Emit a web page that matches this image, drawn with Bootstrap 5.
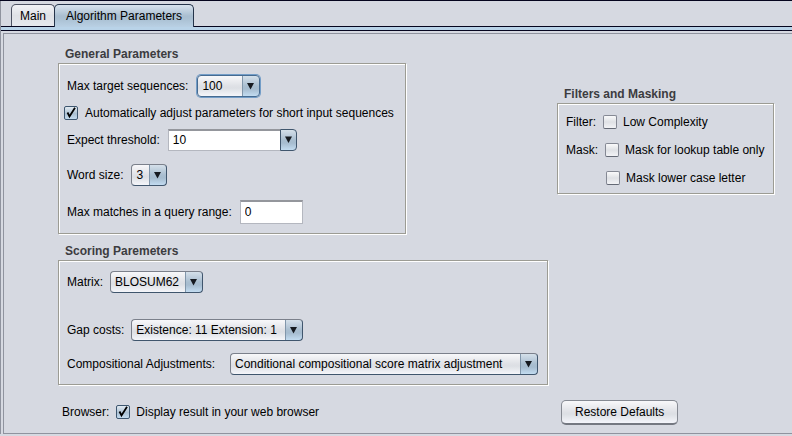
<!DOCTYPE html>
<html lang="en">
<head>
<meta charset="utf-8">
<meta name="viewport" content="width=device-width, initial-scale=1">
<title>Algorithm Parameters</title>
<link href="https://cdn.jsdelivr.net/npm/bootstrap@5.3.0/dist/css/bootstrap.min.css" rel="stylesheet">
<style>
  :root { --panel: #d6d9e1; --edge: #8f939e; --ink: #05051e; }
  body {
    font: 12px/16px "Liberation Sans", Arial, sans-serif;
    color: #000; background: var(--panel);
    border-top: 1px solid var(--ink);
  }
  .window { border-left: 1px solid var(--edge); }
  /* tabs */
  .tab-strip { padding: 3px 10px 0; border: 0; border-bottom: 1px solid var(--ink); }
  .tab-strip .nav-link {
    height: 22px; padding: 3px 8px; margin: 0 0 0 -1px; line-height: 16px; color: #000;
    border: 1px solid #4d5262; border-bottom: 0; border-radius: 5px 5px 0 0;
    background: linear-gradient(#f2f3f6, #dfe1e6 50%, #e6e8ed);
  }
  .tab-strip .nav-item:first-child .nav-link { margin-left: 0; }
  .tab-strip .nav-link.active {
    height: 23px; margin-bottom: -1px; padding: 3px 11px; color: #000; border-color: #25344a;
    background: linear-gradient(#d8e3ee, #a9bed0 50%, #a9bfd1 60%, #b9d0e4);
  }
  .tab-band { height: 4px; background: #b9d3e8; border-bottom: 1px solid var(--ink); }
  .tab-body {
    margin: 2px 0 0 2px; padding: 12px 17px 7px 54px;
    border: 1px solid var(--edge); border-right: 0;
  }
  /* etched groups */
  .columns { display: grid; grid-template-columns: 490px minmax(217px, max-content); column-gap: 9px; }
  .group-title { font-size: 12px; line-height: 16px; font-weight: 700; color: #3c3c40; margin: 0 0 1px; padding-left: 7px; }
  .etched { border: 1px solid #9c9c94; box-shadow: 1px 1px 0 #fff, inset 1px 1px 0 #fff; padding: 0 5px 0 8px; }
  .general { width: 348px; height: 171px; padding-top: 8px; margin-bottom: 1px; }
  .scoring { height: 125px; padding-top: 9px; }
  .masking { height: 91px; padding-top: 4px; }
  .filters { padding-top: 40px; }
  .line { display: flex; align-items: center; gap: 7px; height: 28px; white-space: nowrap; }
  .general .line { height: 27px; gap: 8px; }
  .scoring .line { height: 24px; }
  .line .tick + label, .general .tick + label { margin-left: -1px; }
  .tick-line { margin-left: -3px; }
  .label-wide { min-width: 156px; }
  /* controls */
  .combo {
    appearance: none; height: 22px; padding: 0 20px 0 4px; line-height: 18px; color: #000;
    border: 1px solid #7b808b; border-right-color: #40566d; border-bottom-color: #40566d; border-radius: 4px;
    background:
      url("data:image/svg+xml,%3Csvg xmlns='http://www.w3.org/2000/svg' width='17' height='20'%3E%3Cpath d='M5 7h7L8.500 13.500z' fill='%23161a20'/%3E%3C/svg%3E") right center / 17px 20px no-repeat,
      linear-gradient(#8196aa, #8196aa) right 16px center / 1px 100% no-repeat,
      linear-gradient(#d5e0ea, #a9bed0 50%, #a6bccf 65%, #c3dcf1) right / 17px 100% no-repeat,
      linear-gradient(#f8f8fa, #dfe1e6 50%, #dcdfe4 60%, #f5f6fa);
    outline: 0;
  }
  .combo.is-focused { box-shadow: 0 0 0 1px #739dc7; border-color: #466b91; margin-left: 1px; }
  .w-count { width: 63px; } .w-word { width: 36px; } .w-matrix { width: 93px; }
  .w-gap { width: 172px; } .w-adjust { width: 308px; }
  .field {
    height: 22px; padding: 0 4px; color: #000; background: #fff; min-width: 0;
    border: 1px solid #b4b7bf; border-top: 2px solid #94969c; border-radius: 0; outline: 0;
  }
  .w-threshold { width: 112px; border-right: 0; }
  .w-range { width: 63px; height: 24px; }
  .drop {
    width: 17px; height: 22px; padding: 0; display: grid; place-items: center;
    border: 1px solid #40566d; border-radius: 0 4px 4px 0;
    background: linear-gradient(#d5e0ea, #a9bed0 50%, #a6bccf 65%, #c3dcf1);
  }
  .tick {
    appearance: none; width: 14px; height: 14px; margin: 0; flex: none;
    border: 1px solid #858994; border-bottom-color: #646975; border-radius: 2px;
    background: linear-gradient(#fafafb, #dfe1e5 50%, #f2f3f6);
  }
  .tick:checked {
    border-color: #3d566f;
    background:
      url("data:image/svg+xml,%3Csvg xmlns='http://www.w3.org/2000/svg' width='12' height='12'%3E%3Cpath d='M2.500 5.500L4.500 9.500 10 .8' fill='none' stroke='%23000' stroke-width='1.8'/%3E%3C/svg%3E") center / 12px 12px no-repeat,
      linear-gradient(#e3ebf2, #abc0d2 55%, #c3dbef);
  }
  .restore {
    height: 25px; padding: 0 13px; font-size: 12px; line-height: 20px; color: #000;
    border: 1px solid #868a93; border-bottom: 2px solid #747881; border-radius: 5px;
    background: linear-gradient(#f8f8fa, #dfe1e6 50%, #dcdfe4 60%, #f4f5fb);
  }
  .foot { padding-top: 13px; }
</style>
<script src="https://cdn.jsdelivr.net/npm/bootstrap@5.3.0/dist/js/bootstrap.bundle.min.js"></script>
</head>
<body>
<main class="window">
  <ul class="nav nav-tabs tab-strip" role="tablist">
    <li class="nav-item"><button class="nav-link" type="button" role="tab" aria-selected="false">Main</button></li>
    <li class="nav-item"><button class="nav-link active" type="button" role="tab" aria-selected="true">Algorithm Parameters</button></li>
  </ul>
  <div class="tab-band"></div>
  <form class="tab-body">
    <div class="columns">
      <div>
        <section>
          <h2 class="group-title">General Parameters</h2>
          <div class="etched general">
            <div class="line"><label for="count">Max target sequences:</label>
              <select id="count" class="combo is-focused w-count"><option>100</option></select></div>
            <div class="line tick-line"><input class="tick" type="checkbox" id="auto" checked>
              <label for="auto">Automatically adjust parameters for short input sequences</label></div>
            <div class="line"><label for="threshold">Expect threshold:</label>
              <div class="d-flex"><input id="threshold" class="field w-threshold" type="text" value="10"><button class="drop" type="button" aria-label="Show thresholds"><svg width="9" height="8" viewBox="0 0 9 8"><path d="M1 .5h7L4.500 7z" fill="#161a20"/></svg></button></div></div>
            <div class="line mt-2"><label for="word">Word size:</label>
              <select id="word" class="combo w-word"><option>3</option></select></div>
            <div class="line mt-2 pt-1"><label for="range">Max matches in a query range:</label>
              <input id="range" class="field w-range" type="text" value="0"></div>
          </div>
        </section>
        <section class="pt-2">
          <h2 class="group-title">Scoring Paremeters</h2>
          <div class="etched scoring">
            <div class="line"><label for="matrix">Matrix:</label>
              <select id="matrix" class="combo w-matrix"><option>BLOSUM62</option></select></div>
            <div class="line mt-4"><label for="gap">Gap costs:</label>
              <select id="gap" class="combo w-gap"><option>Existence: 11 Extension: 1</option></select></div>
            <div class="line mt-2 pt-1"><label for="adjust" class="label-wide">Compositional Adjustments:</label>
              <select id="adjust" class="combo w-adjust"><option>Conditional compositional score matrix adjustment</option></select></div>
          </div>
        </section>
      </div>
      <section class="filters">
        <h2 class="group-title">Filters and Masking</h2>
        <div class="etched masking">
          <div class="line"><span>Filter:</span><input class="tick" type="checkbox" id="low"><label for="low">Low Complexity</label></div>
          <div class="line"><span>Mask:</span><input class="tick" type="checkbox" id="lookup"><label for="lookup">Mask for lookup table only</label></div>
          <div class="line ps-4"><input class="tick ms-3" type="checkbox" id="lower"><label for="lower">Mask lower case letter</label></div>
        </div>
      </section>
    </div>
    <div class="columns align-items-center foot">
      <div class="line ps-1"><span>Browser:</span><input class="tick" type="checkbox" id="browser" checked><label for="browser">Display result in your web browser</label></div>
      <div class="ps-1"><button class="btn restore" type="button">Restore Defaults</button></div>
    </div>
  </form>
</main>
</body>
</html>
